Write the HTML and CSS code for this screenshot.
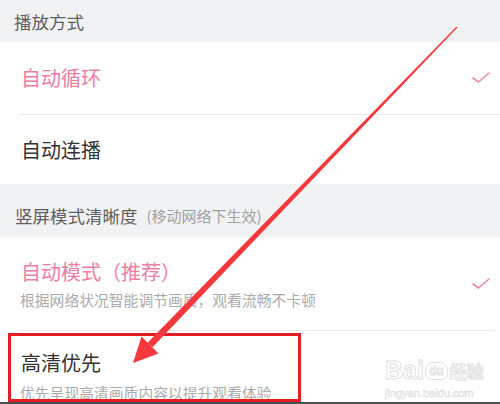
FILE: index.html
```html
<!DOCTYPE html>
<html lang="zh">
<head>
<meta charset="utf-8">
<link rel="stylesheet" href="styles.css">
</head>
<body>
<div class="screen">
  <div class="section-title">播放方式</div>
  <div class="group">
    <div class="item item-first">
      <span class="label selected">自动循环</span>
      <svg class="check" viewBox="0 0 20 14" width="20" height="14"><path d="M2 7 L7.5 11 L18 2" /></svg>
    </div>
    <div class="divider"></div>
    <div class="item item-second">
      <span class="label">自动连播</span>
    </div>
  </div>
  <div class="section-title section-title-tall">竖屏模式清晰度<span class="hint">(移动网络下生效)</span></div>
  <div class="group">
    <div class="item two-line item-auto">
      <div class="texts">
        <div class="label selected">自动模式（推荐）</div>
        <div class="desc">根据网络状况智能调节画质，观看流畅不卡顿</div>
      </div>
      <svg class="check" viewBox="0 0 20 14" width="20" height="14"><path d="M2 7 L7.5 11 L18 2" /></svg>
    </div>
    <div class="divider divider-short"></div>
    <div class="item two-line item-hd">
      <div class="texts">
        <div class="label">高清优先</div>
        <div class="desc desc-hd">优先呈现高清画质内容以提升观看体验</div>
      </div>
    </div>
  </div>
  <div class="bottom-bar"></div>

  <div class="highlight"></div>
  <svg class="arrow" viewBox="0 0 500 404" width="500" height="404">
    <polygon class="shaft" points="456.3,26.7 457.7,27.3 152.5,347.3 147.5,342.7" />
    <polygon class="head" points="133,363 141.5,336.5 158.5,353.5" />
  </svg>
  <div class="watermark">
    <div class="wm-top"><span class="wm-bai">Bai</span><span class="wm-du">du</span><span class="wm-jy">经验</span></div>
    <div class="wm-url">jingyan.baidu.com</div>
  </div>
</div>
</body>
</html>
```

FILE: styles.css
```css
* { box-sizing: border-box; }
html, body { margin: 0; padding: 0; }
body {
  width: 500px;
  height: 404px;
  overflow: hidden;
  background: #ffffff;
  font-family: "Noto Sans CJK SC", "Noto Sans", sans-serif;
}
.screen {
  position: relative;
  width: 500px;
  height: 404px;
  overflow: hidden;
  display: flex;
  flex-direction: column;
}
.section-title {
  height: 42px;
  background: #f1f2f4;
  color: #5e5e5e;
  font-size: 17.5px;
  display: flex;
  align-items: center;
  padding-left: 14px;
  flex-shrink: 0;
}
.section-title-tall {
  height: 53px;
  align-items: flex-start;
  padding-top: 19px;
  line-height: 26px;
  padding-left: 15px;
}
.hint {
  font-size: 15px;
  color: #a0a0a0;
  margin-left: 9px;
}
.group {
  background: #ffffff;
  display: flex;
  flex-direction: column;
  flex-shrink: 0;
}
.item {
  display: flex;
  align-items: center;
  justify-content: space-between;
  padding-left: 21px;
  padding-right: 9px;
}
.item-first { height: 72px; }
.item-second { height: 69px; }
.label {
  font-size: 20px;
  color: #333333;
  line-height: 28px;
}
.label.selected { color: #ec7ea3; }
.check {
  fill: none;
  stroke: #e98aac;
  stroke-width: 1.6;
  stroke-linecap: round;
  stroke-linejoin: round;
}
.divider {
  height: 1px;
  margin-left: 20px;
  background: #e9e9eb;
}
.divider-short { margin-right: 5px; }
.two-line { align-items: center; }
.item-auto { height: 93px; align-items: flex-start; }
.item-auto .texts { padding-top: 21px; }
.item-auto .check { margin-top: 40px; }
.item-hd { height: 71px; align-items: flex-start; overflow: hidden; }
.item-hd .texts { padding-top: 18px; }
.desc {
  font-size: 14.8px;
  color: #ababab;
  line-height: 20px;
  margin-top: 4px;
  margin-left: -1px;
}
.desc-hd { margin-top: 6px; }
.bottom-bar {
  height: 2px;
  background: #4d4d4d;
  flex-shrink: 0;
}
.highlight {
  position: absolute;
  left: 8px;
  top: 333px;
  width: 293px;
  height: 69px;
  border: 3px solid #e31c25;
}
.arrow {
  position: absolute;
  left: 0;
  top: 0;
  pointer-events: none;
}
.shaft, .head { fill: #f4383c; }
.watermark {
  position: absolute;
  left: 385px;
  top: 356px;
  color: #ffffff;
  -webkit-text-stroke: 1px #e2e2e2;
  font-family: "Liberation Sans", Arial, sans-serif;
  font-weight: bold;
}
.wm-top { display: flex; align-items: flex-end; }
.wm-bai { font-size: 25px; line-height: 28px; }
.wm-du {
  font-size: 12px;
  line-height: 16px;
  padding: 0 3px;
  border: 1px solid #e2e2e2;
  border-radius: 8px 8px 6px 6px;
  margin: 0 2px 4px 1px;
}
.wm-jy {
  font-family: "Noto Sans CJK SC", sans-serif;
  font-size: 17px;
  line-height: 26px;
}
.wm-url {
  font-size: 11px;
  line-height: 14px;
  margin-top: 2px;
  font-weight: normal;
  -webkit-text-stroke: 0.6px #dedede;
}
```
